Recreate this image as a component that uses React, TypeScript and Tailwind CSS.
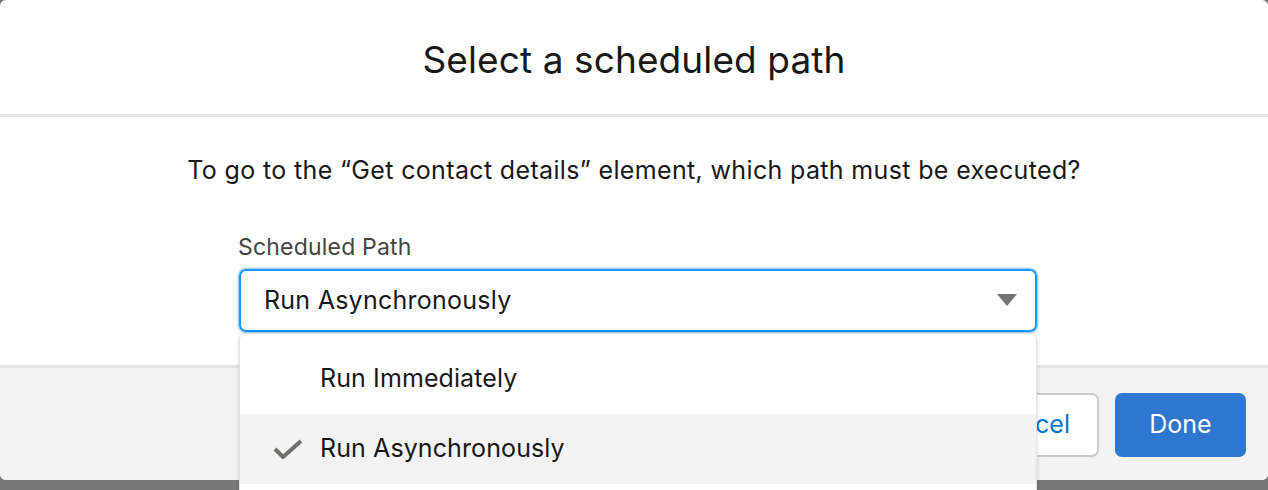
import React from "react";

export default function App() {
  const font = { fontFamily: "Inter, 'Noto Sans', 'Liberation Sans', sans-serif" };
  return (
    <div className="w-[1268px] h-[490px] bg-[#777777] overflow-hidden" style={font}>
      <div className="h-[480px] flex flex-col bg-white rounded-[6px]">
        <div className="h-[117px] shrink-0 flex items-center justify-center border-b-[3px] border-[#e5e5e5] rounded-t-[6px]">
          <h1 className="text-[37px] leading-none text-[#181818] font-normal tracking-[0.1px] pt-[4px]">
            Select a scheduled path
          </h1>
        </div>
        <div className="h-[251px] shrink-0 flex flex-col items-center border-b-[3px] border-[#e5e5e5] relative z-10">
          <p className="mt-[38px] text-[25px] leading-[30px] text-[#181818] tracking-[0.35px]">
            To go to the “Get contact details” element, which path must be executed?
          </p>
          <div className="mt-[48px] ml-[8px] w-[798px] relative">
            <div className="text-[23px] leading-[28px] text-[#444444] -ml-[1px] tracking-[0.2px]">Scheduled Path</div>
            <div className="mt-[8px] h-[63px] border-2 border-[#1b96ff] rounded-[7px] flex items-center justify-between pl-[23px] pr-[18px] shadow-[0_0_3px_#0176d3]">
              <span className="text-[25px] text-[#181818] tracking-[0.25px]">Run Asynchronously</span>
              <svg width="20" height="13" viewBox="0 0 20 13">
                <path d="M0 0 H20 L10 12 Z" fill="#747474" />
              </svg>
            </div>
            <div className="absolute left-0 right-0 top-[100px] h-[200px] bg-white border border-[#e5e5e5] rounded-[6px] shadow-[0_2px_4px_rgba(0,0,0,0.16)] pt-[10px]">
              <div className="h-[70px] flex items-center pl-[80px] text-[25px] text-[#181818] tracking-[0.1px]">
                Run Immediately
              </div>
              <div className="h-[70px] flex items-center bg-[#f3f3f3] text-[25px] text-[#181818] tracking-[0.1px]">
                <div className="w-[80px] flex justify-end pr-[17px]">
                  <svg width="30" height="20" viewBox="0 0 30 20">
                    <path d="M2 10 L10 18 L28 2" fill="none" stroke="#706e6b" strokeWidth="4" />
                  </svg>
                </div>
                Run Asynchronously
              </div>
            </div>
          </div>
        </div>
        <div className="flex-1 bg-[#f3f3f3] rounded-b-[6px] flex items-start justify-end pt-[25px] pr-[22px] gap-[16px]">
          <button className="h-[64px] w-[140px] bg-white border-2 border-[#c9c9c9] rounded-[7px] text-[25px] text-[#0176d3]">
            Cancel
          </button>
          <button className="h-[64px] w-[131px] bg-[#2f76cf] rounded-[7px] text-[25px] text-white">
            Done
          </button>
        </div>
      </div>
    </div>
  );
}
